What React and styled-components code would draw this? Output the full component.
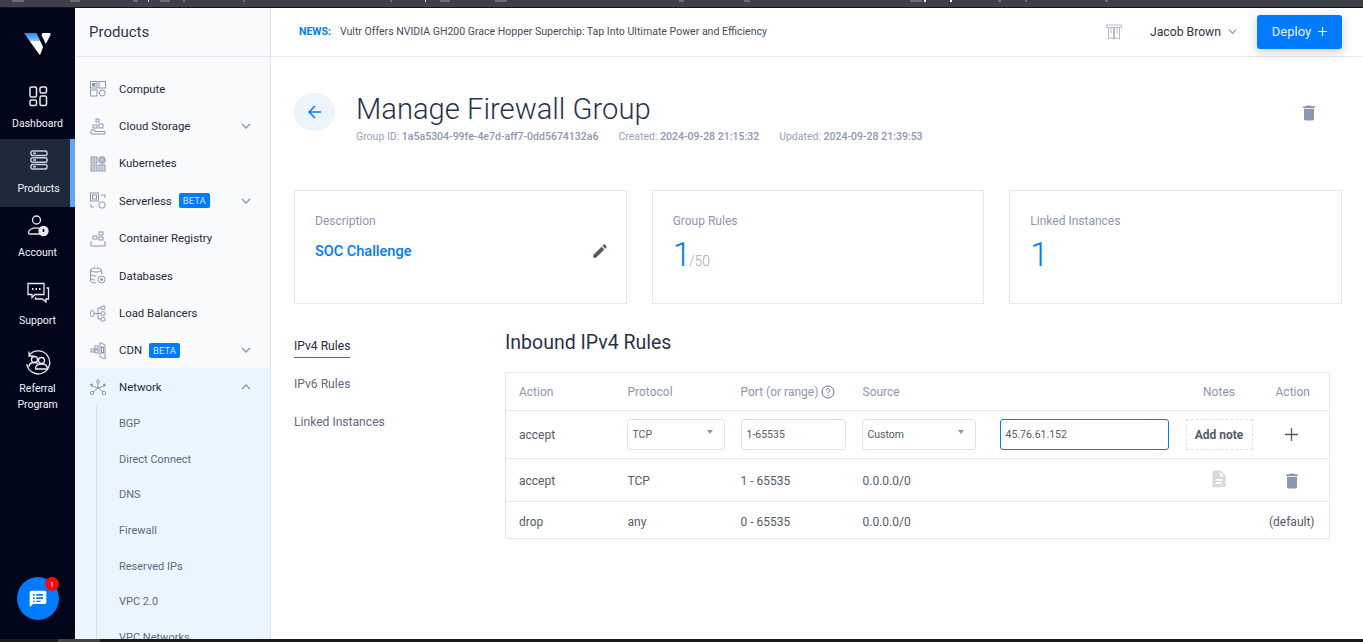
import React from "react";
import styled, { createGlobalStyle } from "styled-components";

const GlobalStyle = createGlobalStyle`
  html, body {
    margin: 0;
    padding: 0;
    height: 100%;
    overflow: hidden;
    background: #ffffff;
    font-family: Roboto, "Liberation Sans", sans-serif;
  }
  * {
    box-sizing: border-box;
  }
`;

const Page = styled.div`
  display: flex;
  flex-direction: column;
  width: 1363px;
  height: 642px;
  overflow: hidden;
`;
const TopStrip = styled.div`
  display: flex;
  flex: 0 0 8px;
  background: #3f3f48;
  border-bottom: 1px solid #17171b;
`;
const StripMark = styled.span`
  height: 2px;
  width: ${(p) => p.$w}px;
  margin-left: ${(p) => p.$ml}px;
  background: ${(p) => p.$color || "#6a6a70"};
`;
const BottomStrip = styled.div`
  flex: 0 0 3px;
  background: #1a1a1a;
`;
const BottomThumb = styled.div`
  width: 42px;
  height: 3px;
  margin-left: 58px;
  background: #444444;
`;
const Body = styled.div`
  display: flex;
  flex: 1;
  min-height: 0;
`;

/* left dark rail */
const Rail = styled.nav`
  position: relative;
  flex: 0 0 75px;
  display: flex;
  flex-direction: column;
  background: #02061a;
`;
const LogoBox = styled.div`
  display: flex;
  justify-content: center;
  height: 67px;
  padding-top: 24px;
`;
const RailItem = styled.a`
  display: flex;
  flex-direction: column;
  align-items: center;
  height: ${(p) => p.$h}px;
  padding-top: ${(p) => p.$top}px;
  gap: ${(p) => p.$gap}px;
  font-size: 10.5px;
  line-height: 16px;
  text-align: center;
  color: #f1f3f8;
  background: ${(p) => (p.$active ? "#1e293b" : "transparent")};
  border-right: ${(p) => (p.$active ? "5px solid #60a5fa" : "none")};
  padding-left: ${(p) => (p.$active ? "7px" : "0")};
`;
const ChatButton = styled.div`
  position: absolute;
  left: 17px;
  top: 569px;
  display: flex;
  align-items: center;
  justify-content: center;
  width: 42px;
  height: 43px;
  border-radius: 50%;
  background: #007bfc;
`;
const ChatBadge = styled.span`
  position: absolute;
  top: 0;
  right: 0;
  display: flex;
  align-items: center;
  justify-content: center;
  width: 14px;
  height: 14px;
  border-radius: 50%;
  background: #f10d0d;
  color: #ffd9d9;
  font-size: 8px;
`;

/* products menu */
const Side = styled.aside`
  flex: 0 0 196px;
  display: flex;
  flex-direction: column;
  overflow: hidden;
  background: #f9fafc;
  border-right: 1px solid #e5e7eb;
`;
const SideTitle = styled.div`
  flex: 0 0 49px;
  display: flex;
  align-items: center;
  padding: 0 0 1px 14px;
  font-size: 15px;
  color: #2c3648;
  border-bottom: 1px solid #e5e7eb;
`;
const SideList = styled.div`
  padding-top: 13px;
`;
const SideRow = styled.div`
  display: flex;
  align-items: center;
  height: 37.4px;
  margin-top: ${(p) => (p.$open ? "-0.7px" : "0")};
  padding-left: 15px;
  padding-right: 19px;
  font-size: 11.4px;
  color: #1f2a3d;
  background: ${(p) => (p.$open ? "#ebf5ff" : "transparent")};
`;
const SideIcon = styled.svg`
  width: 16px;
  height: 17px;
  margin-right: 13px;
  flex: none;
  fill: none;
  stroke: #8d96b0;
  stroke-width: 1;
`;
const Beta = styled.span`
  display: inline-flex;
  align-items: center;
  justify-content: center;
  width: 31px;
  height: 15px;
  margin-left: 7px;
  border-radius: 2px;
  background: #007bfc;
  color: #d6e8ff;
  font-size: 9.5px;
`;
const Chevron = styled.svg`
  width: 10px;
  height: 10px;
  margin-left: auto;
  fill: none;
  stroke: ${(p) => p.$color || "#8d96b0"};
  stroke-width: 1.3;
  transform: ${(p) => (p.$up ? "rotate(180deg)" : "none")};
`;
const SubSection = styled.div`
  background: #ebf5ff;
  padding-left: 21px;
`;
const SubList = styled.div`
  border-left: 1px solid #d8dde6;
  padding-left: 22px;
`;
const SubRow = styled.div`
  display: flex;
  align-items: center;
  height: 35.6px;
  font-size: 11px;
  color: #5f6880;
`;

/* main area */
const Main = styled.main`
  flex: 1;
  display: flex;
  flex-direction: column;
  min-width: 0;
`;
const Header = styled.header`
  flex: 0 0 49px;
  display: flex;
  align-items: center;
  padding: 0 21px 1px 28px;
  border-bottom: 1px solid #e5e7eb;
`;
const NewsLabel = styled.b`
  font-size: 10.5px;
  font-weight: 700;
  color: #007bfc;
  margin-right: 9px;
`;
const NewsText = styled.span`
  font-size: 10.55px;
  color: #444c5c;
`;
const BannerIcon = styled.svg`
  width: 18px;
  height: 18px;
  margin-left: auto;
  fill: none;
  stroke: #b4b9c6;
  stroke-width: 1;
`;
const UserName = styled.span`
  margin-left: 27px;
  font-size: 12.2px;
  color: #2a3448;
`;
const UserCaret = styled(Chevron)`
  margin-left: 7px;
  width: 9px;
  height: 9px;
`;
const DeployButton = styled.button`
  display: flex;
  align-items: center;
  justify-content: center;
  gap: 7px;
  width: 85px;
  height: 34px;
  margin-left: 20px;
  border: none;
  border-radius: 3px;
  background: #007bfc;
  color: #eaf3ff;
  font-family: inherit;
  font-size: 13px;
  box-shadow: 0 3px 10px rgba(30, 50, 90, 0.25);
`;
const Content = styled.div`
  flex: 1;
  padding: 35px 21px 0 23px;
`;
const TitleRow = styled.div`
  display: flex;
  align-items: flex-start;
`;
const BackButton = styled.div`
  display: flex;
  align-items: center;
  justify-content: center;
  width: 41px;
  height: 38px;
  border-radius: 50%;
  background: #edf4fe;
  margin-top: 1px;
  margin-right: 21px;
`;
const TitleBlock = styled.div`
  flex: 1;
`;
const Title = styled.h1`
  margin: -1px 0 0;
  font-size: 29.2px;
  line-height: 36px;
  font-weight: 300;
  color: #28334a;
`;
const Meta = styled.div`
  display: flex;
  gap: 20px;
  margin-top: 3px;
  font-size: 10.52px;
  line-height: 14px;
  color: #9aa2ba;
  b {
    font-weight: 500;
    color: #8d96b0;
  }
`;
const PageTrash = styled.svg`
  width: 20px;
  height: 20px;
  margin: 11px 23px 0 0;
  fill: #8d96b0;
`;
const Cards = styled.div`
  display: grid;
  grid-template-columns: repeat(3, 1fr);
  gap: 25px;
  margin-top: 46px;
`;
const Card = styled.section`
  position: relative;
  height: 114px;
  padding: 22px 20px 0;
  border: 1px solid #e5e7eb;
`;
const CardLabel = styled.div`
  font-size: 12px;
  line-height: 16px;
  color: #8d96b0;
`;
const CardLink = styled.div`
  display: flex;
  align-items: center;
  justify-content: space-between;
  margin-top: 13px;
  margin-right: -3px;
  font-size: 14.5px;
  line-height: 20px;
  font-weight: 500;
  color: #007bfc;
`;
const Pencil = styled.svg`
  width: 18px;
  height: 18px;
  margin-top: -2px;
  fill: #555a63;
`;
const CardValue = styled.div`
  display: flex;
  align-items: baseline;
  margin-top: 7px;
  font-size: 33px;
  line-height: 38px;
  font-weight: 300;
  color: #007bfc;
`;
const CardTotal = styled.span`
  margin-left: -2px;
  font-size: 14px;
  font-weight: 300;
  color: #a0a8be;
`;
const RulesArea = styled.div`
  display: flex;
  margin-top: 25px;
`;
const Tabs = styled.div`
  flex: 0 0 211px;
  display: flex;
  flex-direction: column;
  align-items: flex-start;
  gap: 19px;
  padding-top: 8px;
`;
const Tab = styled.a`
  font-size: 12.1px;
  line-height: 19px;
  padding-bottom: ${(p) => (p.$active ? "1px" : "0")};
  margin-bottom: ${(p) => (p.$active ? "-2px" : "0")};
  color: ${(p) => (p.$active ? "#1c2a40" : "#5f6880")};
  border-bottom: ${(p) => (p.$active ? "1px solid #1778e6" : "none")};
`;
const RulesPanel = styled.div`
  flex: 0 0 825px;
`;
const RulesTitle = styled.h2`
  margin: 1px 0 0;
  font-size: 19.5px;
  line-height: 26px;
  font-weight: 400;
  color: #28334a;
`;
const RulesTable = styled.table`
  width: 824px;
  margin-top: 16px;
  table-layout: fixed;
  border-collapse: collapse;
  border: 1px solid #e5e7eb;
  font-size: 12px;
  color: #555b66;
`;
const HeadCell = styled.th`
  height: 38px;
  padding: 0 0 0 ${(p) => p.$pl || 0}px;
  font-weight: 400;
  text-align: ${(p) => (p.$center ? "center" : "left")};
  color: #8d96b0;
`;
const Row = styled.tr`
  height: ${(p) => p.$h}px;
  border-top: 1px solid #e5e7eb;
`;
const Cell = styled.td`
  padding: ${(p) => p.$pt || 0}px 0 0 ${(p) => p.$pl || 0}px;
`;
const Field = styled.div`
  display: flex;
  align-items: center;
  justify-content: space-between;
  width: ${(p) => p.$w}px;
  height: 31px;
  padding: 0 5px;
  font-size: 10.5px;
  color: #555b66;
  border: 1px solid ${(p) => (p.$focus ? "#007bfc" : "#dfe2e8")};
  border-radius: 3px;
`;
const Caret = styled.span`
  width: 0;
  height: 0;
  margin: -6px 6px 0 0;
  border-left: 3px solid transparent;
  border-right: 3px solid transparent;
  border-top: 4px solid #8d96b0;
`;
const AddNote = styled.div`
  display: flex;
  align-items: center;
  justify-content: center;
  width: 67px;
  height: 31px;
  font-size: 12px;
  font-weight: 700;
  color: #555b66;
  border: 1px dashed #dfe2e8;
`;
const RowIcon = styled.svg`
  width: 20px;
  height: 20px;
  display: block;
  margin: ${(p) => p.$margin || "0 auto"};
  fill: ${(p) => p.$color};
`;
const PlusIcon = styled.svg`
  width: 13px;
  height: 13px;
  display: block;
  margin: 0 auto;
  stroke: #555b66;
  stroke-width: 1.3;
`;
const HelpIcon = styled.svg`
  width: 14px;
  height: 14px;
  margin-left: 3px;
  vertical-align: -3px;
  fill: none;
  stroke: #6c727e;
`;
const DefaultNote = styled.span`
  display: block;
  text-align: center;
`;

const TRASH =
  "M6 19c0 1.1.9 2 2 2h8c1.1 0 2-.9 2-2V7H6v12zM19 4h-3.5l-1-1h-5l-1 1H5v2h14V4z";

const MENU = [
  {
    name: "Compute",
    icon: (
      <>
        <rect x="0.5" y="1.5" width="6.5" height="6.5" />
        <rect x="9" y="1.5" width="6.5" height="6.5" />
        <rect x="0.5" y="10" width="6.5" height="6" />
        <circle cx="12.2" cy="13" r="3" />
        <rect x="2.5" y="3.5" width="2.5" height="2.5" fill="#8d96b0" />
      </>
    ),
  },
  {
    name: "Cloud Storage",
    more: true,
    icon: (
      <>
        <rect x="6" y="1" width="3" height="3" />
        <rect x="3" y="7" width="4" height="3" />
        <rect x="9" y="6" width="4" height="4" />
        <path d="M1 16v-4h4v1.5h10V16z" />
      </>
    ),
  },
  {
    name: "Kubernetes",
    icon: (
      <>
        <rect x="1" y="2" width="6" height="6" fill="#d5d9e4" />
        <circle cx="12" cy="5" r="3.3" fill="#b9bfd0" />
        <rect x="1" y="10" width="6" height="6" fill="#d5d9e4" />
        <rect x="9" y="10" width="6" height="6" fill="#d5d9e4" />
        <path d="M4 3.5v3M4 11.5v3M12 11.5v3" />
      </>
    ),
  },
  {
    name: "Serverless",
    beta: true,
    more: true,
    icon: (
      <>
        <rect x="0.5" y="1" width="8" height="8" />
        <rect x="2.5" y="3" width="4" height="4" />
        <path d="M11 3h4v3M1 12v3h3" />
        <circle cx="12" cy="13" r="3.2" />
      </>
    ),
  },
  {
    name: "Container Registry",
    icon: (
      <>
        <rect x="3" y="6" width="4" height="3" />
        <rect x="9" y="2" width="4" height="3" />
        <rect x="9" y="7" width="4" height="3" />
        <path d="M1 11v5h14v-5" />
      </>
    ),
  },
  {
    name: "Databases",
    icon: (
      <>
        <ellipse cx="6" cy="3" rx="5.5" ry="2" />
        <path d="M0.5 3v11c0 1 2 2 5.5 2M11.5 3v4M0.5 7c0 1.2 2.5 2 5.5 2M0.5 11c0 1.2 2 2 4.5 2" />
        <circle cx="11.5" cy="12.5" r="3.5" />
        <circle cx="11.5" cy="12.5" r="1" fill="#8d96b0" />
      </>
    ),
  },
  {
    name: "Load Balancers",
    icon: (
      <>
        <rect x="0.5" y="5.5" width="3.5" height="6" rx="1.7" />
        <path d="M4 8.5h4M8 3v11M8 3h3M8 8.5h3M8 14h3" />
        <rect x="11" y="1" width="4" height="3.5" rx="1" />
        <rect x="11" y="6.8" width="4" height="3.5" rx="1" />
        <rect x="11" y="12.5" width="4" height="3.5" rx="1" />
      </>
    ),
  },
  {
    name: "CDN",
    beta: true,
    more: true,
    icon: (
      <>
        <path d="M10 0.5l5 2.5v14l-5-2z" />
        <rect x="1" y="7" width="3" height="3" />
        <rect x="5" y="4" width="3" height="3" />
        <rect x="5" y="8" width="3" height="3" />
        <rect x="11.5" y="5" width="2" height="6" />
      </>
    ),
  },
];

const SUB_ITEMS = [
  "BGP",
  "Direct Connect",
  "DNS",
  "Firewall",
  "Reserved IPs",
  "VPC 2.0",
  "VPC Networks",
];

const STRIP_MARKS = [
  [12, 12],
  [46, 10],
  [53, 5],
  [10, 1, "#cccccc"],
  [11, 10],
  [13, 2],
  [58, 2],
  [145, 2],
  [33, 1, "#cccccc"],
  [14, 10],
  [45, 12],
  [172, 5],
  [60, 6],
  [160, 12],
  [2, 2, "#ffffff"],
  [24, 2, "#ffffff"],
  [46, 3],
  [24, 2],
  [78, 3],
];

const ChevronIcon = (props) => (
  <Chevron viewBox="0 0 10 10" {...props}>
    <path d="M1 3l4 4 4-4" />
  </Chevron>
);

const UserChevron = () => (
  <UserCaret viewBox="0 0 10 10">
    <path d="M1 3l4 4 4-4" />
  </UserCaret>
);

const VultrLogo = () => (
  <svg width="27" height="23" viewBox="0 0 27 23">
    <defs>
      <linearGradient id="logoBlue" x1="0" y1="0" x2="0" y2="1">
        <stop offset="0" stopColor="#1e88f5" />
        <stop offset="0.35" stopColor="#8cc4fb" />
        <stop offset="0.4" stopColor="#ffffff" />
      </linearGradient>
    </defs>
    <path d="M0 1h12.5l6.5 14-2.5 7q-.8 1-1.6 0z" fill="url(#logoBlue)" />
    <path d="M18.5 1h7.5l.8 1.5-5 9.5-4.3-9z" fill="#ffffff" />
  </svg>
);

const railIcon = { fill: "none", stroke: "#e8ebf2" };

const App = () => (
  <Page>
    <GlobalStyle />
    <TopStrip>
      {STRIP_MARKS.map(([ml, w, color], i) => (
        <StripMark key={i} $ml={ml} $w={w} $color={color} />
      ))}
    </TopStrip>
    <Body>
      <Rail>
        <LogoBox>
          <VultrLogo />
        </LogoBox>
        <RailItem $h={64} $top={9} $gap={8}>
          <svg width="24" height="24" viewBox="0 0 24 24" {...railIcon} strokeWidth="1.5">
            <rect x="4" y="3" width="6.5" height="10" rx="1.5" />
            <rect x="14" y="3" width="6.5" height="6" rx="1.5" />
            <rect x="4" y="16" width="6.5" height="5.5" rx="1.5" />
            <rect x="14" y="12" width="6.5" height="9.5" rx="1.5" />
          </svg>
          Dashboard
        </RailItem>
        <RailItem $h={68} $top={9} $gap={9} $active>
          <svg width="24" height="24" viewBox="0 0 24 24" fill="none" stroke="#c9cedb" strokeWidth="1.5">
            <rect x="4" y="3" width="16" height="4.5" rx="1.5" />
            <rect x="4" y="9.8" width="16" height="4.5" rx="1.5" />
            <rect x="4" y="16.5" width="16" height="4.5" rx="1.5" />
            <path d="M6 5.2h3M6 12h3M6 18.7h3" />
          </svg>
          Products
        </RailItem>
        <RailItem $h={65} $top={7} $gap={7}>
          <svg width="24" height="24" viewBox="0 0 24 24" {...railIcon} strokeWidth="1.3">
            <circle cx="10.5" cy="6" r="4" />
            <path d="M14 14.5c-1-.4-2.2-.6-3.500-.6-4.500 0-8 2-8 4.500 0 1 .5 1.600 1.500 1.600h10" />
            <circle cx="17.5" cy="17" r="4.5" fill="#e8ebf2" />
            <path d="M17.5 15v3" stroke="#02061a" strokeWidth="1.6" />
          </svg>
          Account
        </RailItem>
        <RailItem $h={69} $top={8} $gap={9}>
          <svg width="24" height="24" viewBox="0 0 24 24" {...railIcon} strokeWidth="1.3">
            <path d="M2 3.5h16v11H9l-3 3v-3H2z" />
            <path d="M20.5 8h2v11h-2.5v3l-3.5-3H9.5v-2" />
            <path d="M6 9h1.5M9.5 9H11M13 9h1.5" strokeWidth="1.8" />
          </svg>
          Support
        </RailItem>
        <RailItem $h={90} $top={8} $gap={6}>
          <svg width="26" height="26" viewBox="0 0 26 26" {...railIcon} strokeWidth="1.3">
            <path d="M4 6.5A11.5 11.5 0 1 1 1.8 15M4 2.5v4.5h4.5" />
            <circle cx="9.5" cy="10.5" r="3" />
            <circle cx="16.5" cy="11.5" r="3" />
            <path d="M4 18c0-3 2.5-4.5 5.5-4.5 1.4 0 2.5.3 3.4 1M10.5 20c0-3.5 2.5-5 6-5s6 1.5 6 5z" />
          </svg>
          <span>
            Referral
            <br />
            Program
          </span>
        </RailItem>
        <ChatButton>
          <svg width="20" height="20" viewBox="0 0 24 24">
            <path
              d="M20 2H4c-1.1 0-2 .9-2 2v18l4-4h14c1.1 0 2-.9 2-2V4c0-1.1-.9-2-2-2z"
              fill="#ffffff"
            />
            <path d="M6 6h2v2H6zM10 6h8v2h-8zM6 10h2v2H6zM10 10h8v2h-8zM6 14h2v1.5H6zM10 14h5v1.5h-5z" fill="#007bfc" />
          </svg>
          <ChatBadge>1</ChatBadge>
        </ChatButton>
      </Rail>
      <Side>
        <SideTitle>Products</SideTitle>
        <SideList>
          {MENU.map((item) => (
            <SideRow key={item.name}>
              <SideIcon viewBox="0 0 16 17">{item.icon}</SideIcon>
              {item.name}
              {item.beta && <Beta>BETA</Beta>}
              {item.more && <ChevronIcon />}
            </SideRow>
          ))}
          <SideRow $open>
            <SideIcon viewBox="0 0 16 17">
              <circle cx="8" cy="2.5" r="1.5" />
              <circle cx="2" cy="14" r="1.7" />
              <circle cx="14" cy="14" r="1.7" />
              <circle cx="1.5" cy="6" r="1" fill="#8d96b0" />
              <circle cx="14.5" cy="6" r="1" fill="#8d96b0" />
              <path d="M8 4v5M8 9l-5 4M8 9l5 4M2 7l6 2 6-2" />
            </SideIcon>
            Network
            <ChevronIcon $up />
          </SideRow>
          <SubSection>
            <SubList>
              {SUB_ITEMS.map((name) => (
                <SubRow key={name}>{name}</SubRow>
              ))}
            </SubList>
          </SubSection>
        </SideList>
      </Side>
      <Main>
        <Header>
          <NewsLabel>NEWS:</NewsLabel>
          <NewsText>
            Vultr Offers NVIDIA GH200 Grace Hopper Superchip: Tap Into Ultimate Power and Efficiency
          </NewsText>
          <BannerIcon viewBox="0 0 18 18">
            <path d="M1.5 2h15v2.5h-15zM3.5 4.5V16l2.5-1.5L8.5 16V4.5M9.5 4.5V16l2.500-1.500 2.500 1.500V4.500M6 4.500v6M12 4.500v6" />
          </BannerIcon>
          <UserName>Jacob Brown</UserName>
          <UserChevron />
          <DeployButton>
            Deploy
            <svg width="9" height="9" viewBox="0 0 10 10" stroke="#eaf3ff" strokeWidth="1.3">
              <path d="M5 0v10M0 5h10" />
            </svg>
          </DeployButton>
        </Header>
        <Content>
          <TitleRow>
            <BackButton>
              <svg width="16" height="16" viewBox="0 0 16 16" fill="none" stroke="#007bfc" strokeWidth="1.5">
                <path d="M14 8H2M8 2L2 8l6 6" />
              </svg>
            </BackButton>
            <TitleBlock>
              <Title>Manage Firewall Group</Title>
              <Meta>
                <span>
                  Group ID: <b>1a5a5304-99fe-4e7d-aff7-0dd5674132a6</b>
                </span>
                <span>
                  Created: <b>2024-09-28 21:15:32</b>
                </span>
                <span>
                  Updated: <b>2024-09-28 21:39:53</b>
                </span>
              </Meta>
            </TitleBlock>
            <PageTrash viewBox="0 0 24 24">
              <path d={TRASH} />
            </PageTrash>
          </TitleRow>
          <Cards>
            <Card>
              <CardLabel>Description</CardLabel>
              <CardLink>
                SOC Challenge
                <Pencil viewBox="0 0 24 24">
                  <path d="M3 17.25V21h3.75L17.81 9.94l-3.75-3.75L3 17.25zM20.71 7.04c.39-.39.39-1.02 0-1.41l-2.34-2.34c-.39-.39-1.02-.39-1.41 0l-1.83 1.83 3.75 3.75 1.83-1.83z" />
                </Pencil>
              </CardLink>
            </Card>
            <Card>
              <CardLabel>Group Rules</CardLabel>
              <CardValue>
                1<CardTotal>/50</CardTotal>
              </CardValue>
            </Card>
            <Card>
              <CardLabel>Linked Instances</CardLabel>
              <CardValue>1</CardValue>
            </Card>
          </Cards>
          <RulesArea>
            <Tabs>
              <Tab $active>IPv4 Rules</Tab>
              <Tab>IPv6 Rules</Tab>
              <Tab>Linked Instances</Tab>
            </Tabs>
            <RulesPanel>
              <RulesTitle>Inbound IPv4 Rules</RulesTitle>
              <RulesTable>
                <colgroup>
                  <col width="121" />
                  <col width="114" />
                  <col width="121" />
                  <col width="138" />
                  <col width="186" />
                  <col width="67" />
                  <col width="77" />
                </colgroup>
                <thead>
                  <tr>
                    <HeadCell $pl={13}>Action</HeadCell>
                    <HeadCell $pl={1}>Protocol</HeadCell>
                    <HeadCell>
                      Port (or range)
                      <HelpIcon viewBox="0 0 14 14">
                        <circle cx="7" cy="7" r="6" />
                        <path d="M5.2 5.5a1.8 1.8 0 1 1 2.8 1.5c-.7.4-1 .8-1 1.5M7 9.8v1.2" />
                      </HelpIcon>
                    </HeadCell>
                    <HeadCell $pl={1}>Source</HeadCell>
                    <HeadCell />
                    <HeadCell $center>Notes</HeadCell>
                    <HeadCell $center $pl={4}>Action</HeadCell>
                  </tr>
                </thead>
                <tbody>
                  <Row $h={48}>
                    <Cell $pl={13}>accept</Cell>
                    <Cell>
                      <Field $w={98}>
                        TCP
                        <Caret />
                      </Field>
                    </Cell>
                    <Cell>
                      <Field $w={105}>1-65535</Field>
                    </Cell>
                    <Cell>
                      <Field $w={114}>
                        Custom
                        <Caret />
                      </Field>
                    </Cell>
                    <Cell>
                      <Field $w={169} $focus>
                        45.76.61.152
                      </Field>
                    </Cell>
                    <Cell>
                      <AddNote>Add note</AddNote>
                    </Cell>
                    <Cell $pl={2}>
                      <PlusIcon viewBox="0 0 13 13">
                        <path d="M6.5 0v13M0 6.5h13" />
                      </PlusIcon>
                    </Cell>
                  </Row>
                  <Row $h={43}>
                    <Cell $pl={13} $pt={2}>accept</Cell>
                    <Cell $pl={1} $pt={2}>TCP</Cell>
                    <Cell $pt={2}>1 - 65535</Cell>
                    <Cell $pl={1} $pt={2}>0.0.0.0/0</Cell>
                    <Cell />
                    <Cell $pt={2}>
                      <RowIcon viewBox="0 0 24 24" $color="#d8d9db" $margin="-4px auto 0">
                        <path d="M14 2H6c-1.1 0-2 .9-2 2v16c0 1.1.9 2 2 2h12c1.1 0 2-.9 2-2V8l-6-6zm2 16H8v-2h8v2zm0-4H8v-2h8v2zm-3-5V3.5L18.5 9H13z" />
                      </RowIcon>
                    </Cell>
                    <Cell $pl={2} $pt={1}>
                      <RowIcon viewBox="0 0 24 24" $color="#8d96b0">
                        <path d={TRASH} />
                      </RowIcon>
                    </Cell>
                  </Row>
                  <Row $h={37}>
                    <Cell $pl={13} $pt={3}>drop</Cell>
                    <Cell $pl={1} $pt={3}>any</Cell>
                    <Cell $pt={3}>0 - 65535</Cell>
                    <Cell $pl={1} $pt={3}>0.0.0.0/0</Cell>
                    <Cell />
                    <Cell />
                    <Cell $pl={2} $pt={3}>
                      <DefaultNote>(default)</DefaultNote>
                    </Cell>
                  </Row>
                </tbody>
              </RulesTable>
            </RulesPanel>
          </RulesArea>
        </Content>
      </Main>
    </Body>
    <BottomStrip>
      <BottomThumb />
    </BottomStrip>
  </Page>
);

export default App;
